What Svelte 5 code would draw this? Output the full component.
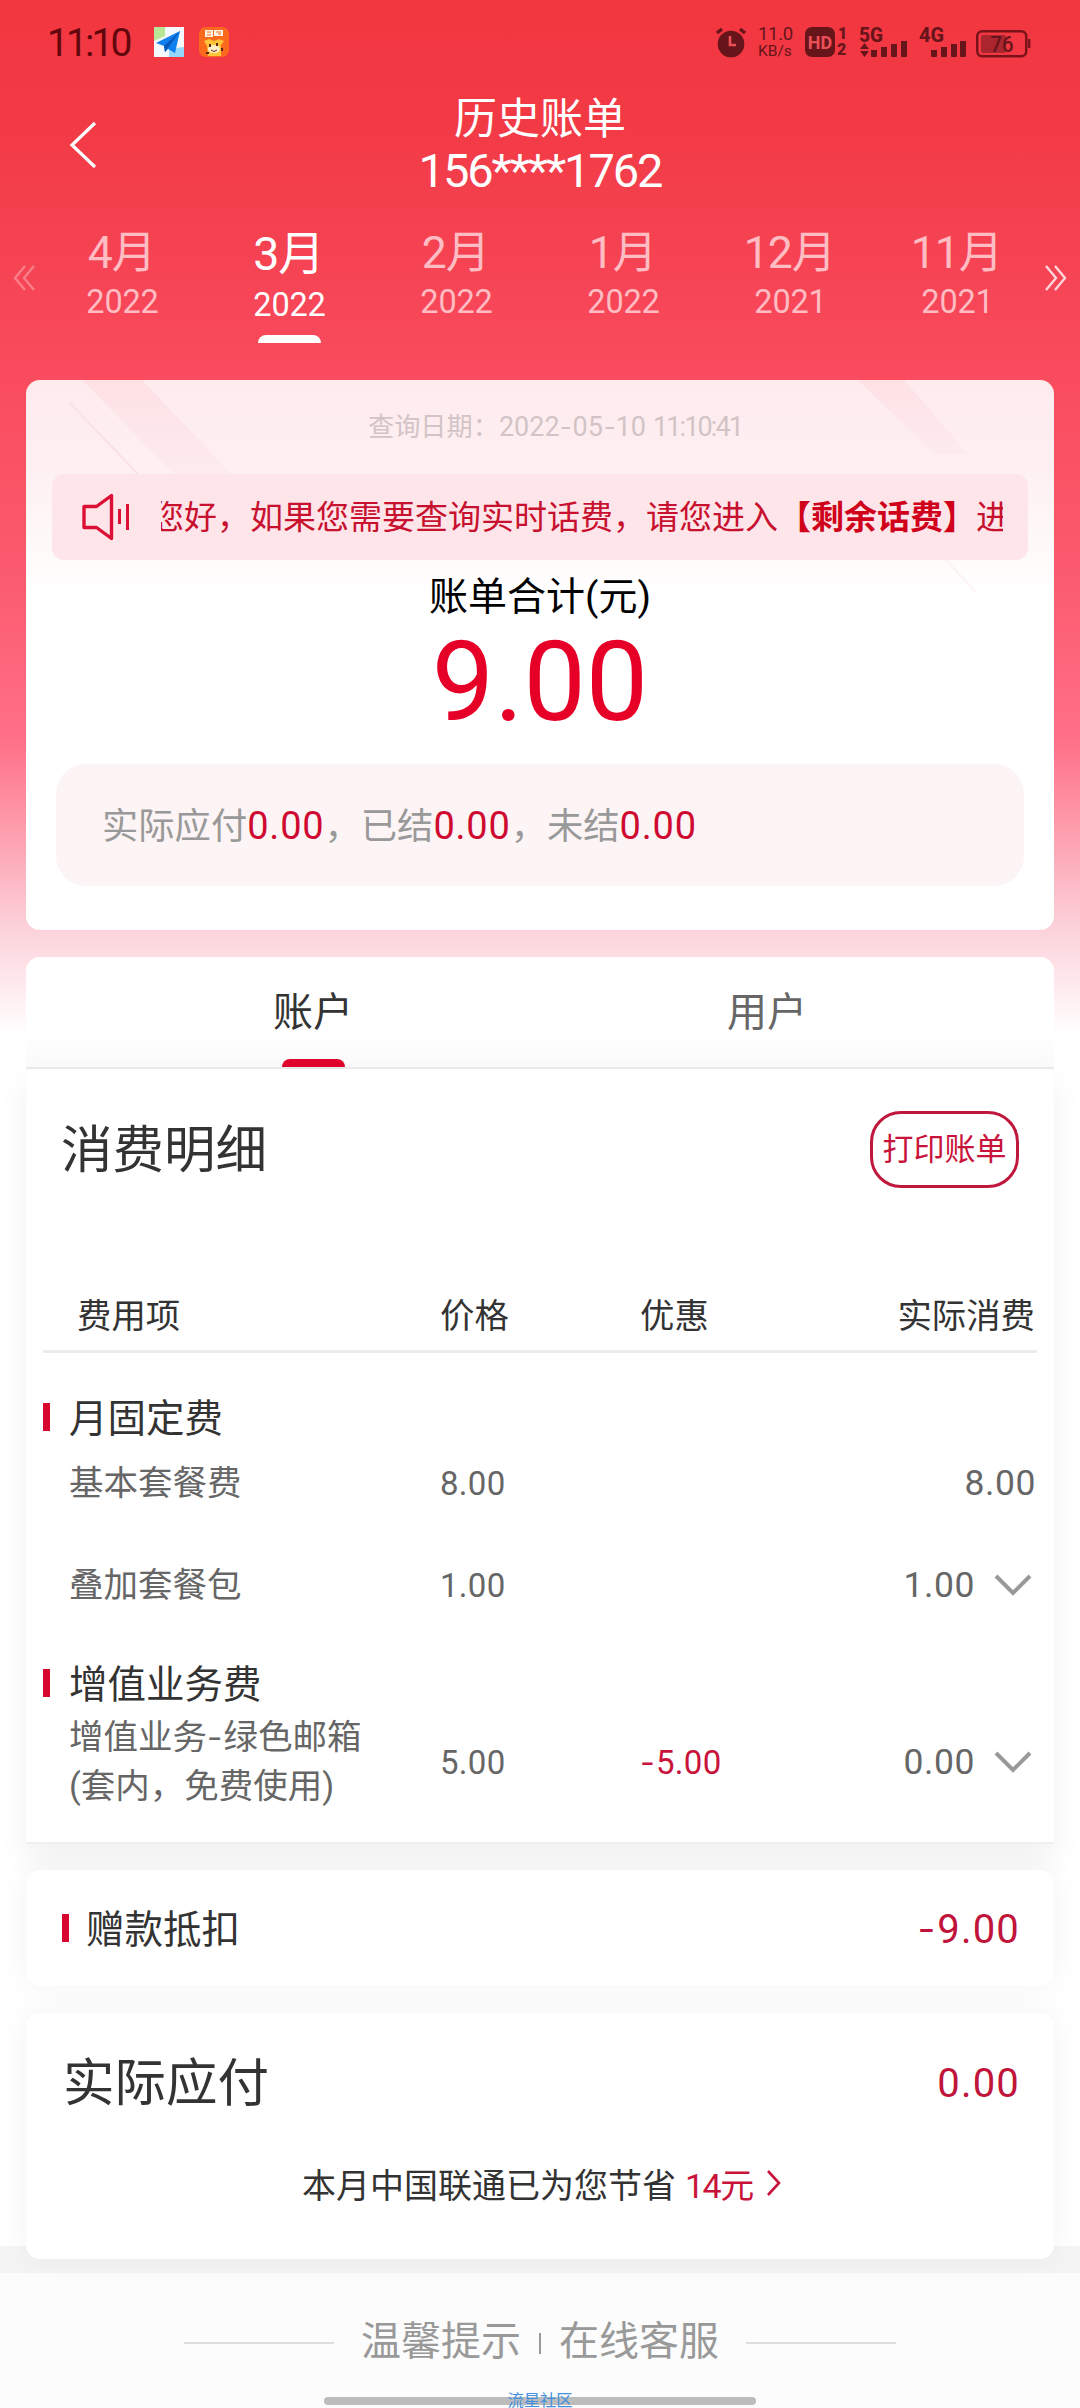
<!--
  App.svelte - History bill page (monthly bill, account tab)
-->
<script lang="ts">
  const months = [
    { month: '4月', year: '2022' },
    { month: '3月', year: '2022' },
    { month: '2月', year: '2022' },
    { month: '1月', year: '2022' },
    { month: '12月', year: '2021' },
    { month: '11月', year: '2021' }
  ];
  let activeMonth = $state(1);

  const tabs = ['账户', '用户'];
  let activeTab = $state(0);

  const sections = [
    {
      title: '月固定费',
      rows: [
        { name: ['基本套餐费'], price: '8.00', discount: '', actual: '8.00', more: false },
        { name: ['叠加套餐包'], price: '1.00', discount: '', actual: '1.00', more: true }
      ]
    },
    {
      title: '增值业务费',
      rows: [
        { name: ['增值业务-绿色邮箱', '(套内，免费使用)'], price: '5.00', discount: '-5.00', actual: '0.00', more: true }
      ]
    }
  ];
</script>

<!-- Text with its hyphens drawn a little wider -->
{#snippet dashed(text: string)}{#each text.split('-') as part, i}{#if i > 0}<i class="dash">-</i>{/if}{part}{/each}{/snippet}

<div class="page">
  <!-- Status bar -->
  <div class="status-bar">
    <span class="clock">11:10</span>
    <svg class="app-icon map" width="30" height="30" viewBox="0 0 30 30">
      <rect width="30" height="30" fill="#f4f7fb" />
      <path d="M0 0H11V9L0 14Z" fill="#b9e596" />
      <path d="M15 30V22L30 20V30Z" fill="#93d8fb" />
      <path d="M26 4L2 16L10 19L11 25L14 22L21 26Z" fill="#0f7ff0" />
      <path d="M26 4L10 19L11 25L14 21Z" fill="#0757b8" />
    </svg>
    <svg class="app-icon" width="30" height="30" viewBox="0 0 30 30">
      <rect width="30" height="30" rx="7" fill="#fb6a1c" />
      <path d="M6 3H14V10H6ZM15 3H24V9H15Z" fill="#fff3e4" />
      <path d="M8 5H12M8 8H12M17 5H22M19 7H22" stroke="#fb6a1c" stroke-width="1" />
      <path d="M5 14L10 12L15 14L20 12L25 14L22 18L22 29H9L8 19Z" fill="#ffc53a" />
      <ellipse cx="15" cy="22" rx="6" ry="4" fill="#fff0c8" />
      <path d="M10 17h2v3h-2zM17 16h2v3h-2zM7 25h3v2h-3zM22 21h2v3h-2z" fill="#5a2410" />
      <path d="M12 23Q15 26 18 23" stroke="#5a2410" stroke-width="1" fill="none" />
    </svg>

    <div class="status-right">
      <svg class="alarm" width="32" height="32" viewBox="0 0 32 32">
        <circle cx="16" cy="18" r="13.3" fill="#67141a" />
        <path d="M2 7L7 3M30 7L25 3" stroke="#67141a" stroke-width="3.5" />
        <path d="M15 10V19H21" stroke="#ec5058" stroke-width="2.6" fill="none" />
      </svg>
      <div class="speed">
        <span class="speed-value">11.0</span>
        <span class="speed-unit">KB/s</span>
      </div>
      <div class="hd">HD</div>
      <div class="sim-index"><span>1</span><span>2</span></div>
      <svg class="signal" width="50" height="32" viewBox="0 0 50 32">
        <text x="0" y="16" textLength="24" lengthAdjust="spacingAndGlyphs">5G</text>
        <path d="M1 23L5.5 17L10 23ZM1 25L5.5 31L10 25Z" />
        <path d="M12 24h6v6q0 1-1 1h-4q-1 0-1-1zM22 21h6v9q0 1-1 1h-4q-1 0-1-1zM32 18h6v12q0 1-1 1h-4q-1 0-1-1zM42 15h6v15q0 1-1 1h-4q-1 0-1-1z" />
      </svg>
      <svg class="signal second" width="50" height="32" viewBox="0 0 50 32">
        <text x="0" y="16" textLength="25" lengthAdjust="spacingAndGlyphs">4G</text>
        <path d="M12 24h6v6q0 1-1 1h-4q-1 0-1-1zM22 21h6v9q0 1-1 1h-4q-1 0-1-1zM32 18h6v12q0 1-1 1h-4q-1 0-1-1zM41 15h6v15q0 1-1 1h-4q-1 0-1-1z" />
      </svg>
      <svg class="battery" width="56" height="28" viewBox="0 0 56 28">
        <rect x="1.25" y="1.25" width="49" height="25" rx="5" fill="none" stroke="#7c1219" stroke-width="2.5" />
        <rect x="5" y="5" width="25" height="18" rx="2" fill="#ab252e" />
        <rect x="52" y="9" width="2.4" height="9" fill="#7c1219" />
        <text x="14.5" y="22" textLength="23" lengthAdjust="spacingAndGlyphs">76</text>
      </svg>
    </div>
  </div>

  <!-- Title -->
  <header class="header">
    <svg class="back" width="30" height="50" viewBox="0 0 30 50">
      <path d="M27 3L4 25L27 47" fill="none" stroke="#fff" stroke-width="3.2" />
    </svg>
    <div class="heading">
      <h1>历史账单</h1>
      <p>156****1762</p>
    </div>
  </header>

  <!-- Month picker -->
  <nav class="months">
    <svg class="page-arrow dim" width="23" height="26" viewBox="0 0 23 26">
      <path d="M12 1L2 13L12 25M21 1L11 13L21 25" />
    </svg>
    <div class="month-list">
      {#each months as item, i}
        <button class="month" class:active={i === activeMonth} onclick={() => (activeMonth = i)}>
          <span class="month-name">{item.month}</span>
          <span class="month-year">{item.year}</span>
        </button>
      {/each}
    </div>
    <svg class="page-arrow" width="23" height="26" viewBox="0 0 23 26">
      <path d="M2 1L12 13L2 25M11 1L21 13L11 25" />
    </svg>
  </nav>

  <!-- Total -->
  <section class="card total-card">
    <svg class="stripes" width="1028" height="220" viewBox="0 0 1028 220">
      <defs>
        <linearGradient id="fade" x1="0" y1="0" x2="0" y2="1">
          <stop offset="0" stop-color="#fde1e5" />
          <stop offset="1" stop-color="#fdebee" />
        </linearGradient>
      </defs>
      <path d="M56 0H116L206 94H148Z" fill="url(#fade)" />
      <path d="M43 22L112 94" stroke="#fbe0e5" stroke-width="2" />
      <path d="M832 0H878L942 74L908 74Z" fill="url(#fade)" />
      <path d="M918 178L950 212" stroke="#fdf3f5" stroke-width="2" />
    </svg>
    <p class="query-date">查询日期：<span>{@render dashed('2022-05-10')}</span><span class="time">11:10:41</span></p>
    <div class="notice">
      <svg class="speaker" width="48" height="48" viewBox="0 0 48 48">
        <path d="M2 13.5H14.5L29.5 2.5V45.5L14.5 34.5H2Z" fill="none" stroke="#dc1034" stroke-width="3.4" stroke-linejoin="round" />
        <path d="M37.5 16V31M45.5 11V37" stroke="#dc1034" stroke-width="3" />
      </svg>
      <div class="notice-view">
        <div class="notice-text">您好，如果您需要查询实时话费，请您进入<strong>【剩余话费】</strong>进</div>
      </div>
    </div>
    <p class="total-label">账单合计(元)</p>
    <p class="total-value">9.00</p>
    <div class="settled">
      实际应付<b>0.00</b>，已结<b>0.00</b>，未结<b>0.00</b>
    </div>
  </section>

  <!-- Account / user tabs -->
  <div class="tabs">
    {#each tabs as tab, i}
      <button class="tab" class:active={i === activeTab} onclick={() => (activeTab = i)}>{tab}</button>
    {/each}
  </div>

  <!-- Charge details -->
  <section class="card detail-card">
    <div class="detail-header">
      <h2>消费明细</h2>
      <button class="print">打印账单</button>
    </div>

    <div class="grid table-head">
      <span class="first">费用项</span>
      <span>价格</span>
      <span>优惠</span>
      <span class="last">实际消费</span>
    </div>

    {#each sections as section}
      <div class="section">
        <h3>{section.title}</h3>
        {#each section.rows as row}
          <div class="grid row" class:tall={row.name.length > 1}>
            <span class="name">
              {#each row.name as line}<span>{@render dashed(line)}</span>{/each}
            </span>
            <span class="price">{row.price}</span>
            <span class="discount">{@render dashed(row.discount)}</span>
            <span class="actual">
              {row.actual}
              {#if row.more}
                <svg width="40" height="24" viewBox="0 0 40 24">
                  <path d="M3 3L20 20L37 3" fill="none" stroke="#999" stroke-width="4" />
                </svg>
              {/if}
            </span>
          </div>
        {/each}
      </div>
    {/each}
  </section>

  <section class="card gift-card">
    <h3>赠款抵扣</h3>
    <span class="amount">{@render dashed('-9.00')}</span>
  </section>

  <section class="card pay-card">
    <div class="pay-row">
      <h2>实际应付</h2>
      <span class="amount">0.00</span>
    </div>
    <p class="saved">
      本月中国联通已为您节省<em>14元</em>
      <svg width="16" height="28" viewBox="0 0 16 28">
        <path d="M2 2L13 14L2 26" fill="none" stroke="#c8133a" stroke-width="2.6" />
      </svg>
    </p>
  </section>

  <footer class="footer">
    <span class="rule"></span>
    <span class="link">温馨提示</span>
    <span class="divider"></span>
    <span class="link">在线客服</span>
    <span class="rule"></span>
  </footer>

  <div class="home-bar"><span>流星社区</span></div>
</div>

<style>
  :global(body) {
    margin: 0;
    background: #fff;
  }

  .page {
    position: relative;
    display: flex;
    flex-direction: column;
    width: 1080px;
    height: 2408px;
    overflow: hidden;
    box-sizing: border-box;
    font-family: Roboto, 'Noto Sans CJK SC', sans-serif;
    color: #333;
    background:
      linear-gradient(#f4f4f4, #f4f4f4) 0 2246px / 100% 27px no-repeat,
      linear-gradient(#fcfcfc, #fcfcfc) 0 2273px / 100% 135px no-repeat,
      linear-gradient(
        #f23640 0,
        #f23a45 120px,
        #f64556 290px,
        #f94c5e 380px,
        #fb5a6e 570px,
        #ff7088 740px,
        #fd9dad 830px,
        #fcd0d9 925px,
        #fddfe5 960px,
        #fff 1035px
      );
  }

  h1,
  h2,
  h3,
  p {
    margin: 0;
    font-weight: 400;
  }

  button {
    padding: 0;
    border: none;
    background: none;
    font-family: inherit;
    color: inherit;
  }

  svg {
    flex: none;
    display: block;
    overflow: visible;
  }

  .dash {
    display: inline-block;
    margin: 0 0.1em;
    font-style: normal;
    transform: scaleX(1.3);
  }

  /* Status bar */
  .status-bar {
    display: flex;
    align-items: flex-start;
    height: 90px;
    padding: 27px 52px 0 47px;
    box-sizing: border-box;
    color: #67141a;
  }

  .clock {
    width: 107px;
    font-size: 39px;
    line-height: 33px;
    letter-spacing: -2.9px;
    color: #64070d;
    white-space: nowrap;
  }

  .app-icon.map {
    margin-right: 15px;
  }

  .status-right {
    display: flex;
    margin-left: auto;
  }

  .alarm {
    margin: -1px 11px 0 0;
  }

  .speed {
    display: flex;
    flex-direction: column;
    width: 47px;
    white-space: nowrap;
  }

  .speed-value {
    font-size: 18.5px;
    line-height: 15px;
    letter-spacing: -0.3px;
  }

  .speed-unit {
    margin-top: 1px;
    font-size: 15.5px;
    line-height: 16px;
  }

  .hd {
    width: 30px;
    height: 30px;
    border-radius: 7px;
    background: #67141a;
    color: #ec5058;
    font-size: 18px;
    font-weight: 700;
    line-height: 31px;
    text-align: center;
  }

  .sim-index {
    display: flex;
    flex-direction: column;
    width: 24px;
    padding-left: 2px;
    box-sizing: border-box;
    font-size: 16px;
    font-weight: 900;
    line-height: 15px;
  }

  .sim-index span:first-child {
    padding-left: 1px;
    margin-bottom: 2px;
    line-height: 13px;
  }

  .signal {
    margin-top: -1px;
    fill: #67141a;
  }

  .signal.second {
    margin: -1px 7px 0 10px;
  }

  .signal text {
    font-size: 20px;
    font-weight: 800;
  }

  .battery {
    margin: 3px -4px 0 0;
  }

  .battery text {
    font-size: 22px;
    font-weight: 500;
    fill: #67141a;
  }

  /* Title */
  .header {
    display: flex;
    height: 130px;
    padding-left: 68px;
    box-sizing: border-box;
  }

  .back {
    margin-top: 30px;
  }

  .heading {
    width: 884px;
    color: #fff;
    text-align: center;
  }

  .heading h1 {
    font-size: 43px;
    line-height: 58px;
  }

  .heading p {
    font-size: 47px;
    line-height: 46px;
    letter-spacing: -2.1px;
  }

  /* Months */
  .months {
    display: flex;
    align-items: flex-start;
    height: 160px;
  }

  .page-arrow {
    margin: 45px 3px 0 13px;
    fill: none;
    stroke: #ffd5da;
    stroke-width: 2.4;
  }

  .months > .page-arrow:last-child {
    margin-left: 3px;
  }

  .page-arrow.dim {
    opacity: 0.4;
  }

  .month-list {
    display: grid;
    grid-template-columns: repeat(6, 167px);
    width: 1002px;
  }

  .month {
    display: flex;
    flex-direction: column;
    align-items: center;
    color: #ffbcc3;
  }

  .month-name {
    margin-top: 7px;
    padding-right: 2px;
    font-size: 44.5px;
    line-height: 52px;
    letter-spacing: -1px;
  }

  .month-year {
    margin-top: 7px;
    font-size: 32.5px;
    line-height: 32px;
    letter-spacing: -0.2px;
  }

  .month.active {
    color: #fff;
  }

  .month.active .month-name {
    font-size: 46.5px;
    line-height: 55px;
  }

  .month.active .month-year::after {
    content: '';
    display: block;
    width: 63px;
    height: 8px;
    margin: 14px auto 0;
    border-radius: 8px 8px 0 0;
    background: #fff;
  }

  /* Cards */
  .card {
    flex: none;
    margin: 0 26px;
    border-radius: 14px;
    background: #fff;
    box-sizing: border-box;
  }

  .total-card {
    position: relative;
    height: 550px;
    overflow: hidden;
    background: linear-gradient(#feebee 0, #feeff1 80px, #fffcfc 190px, #fff 220px);
  }

  .stripes {
    position: absolute;
    top: 0;
    left: 0;
  }

  .query-date {
    position: relative;
    height: 94px;
    padding-left: 342px;
    font-size: 26.2px;
    line-height: 94px;
    color: #d2c4c6;
    white-space: nowrap;
  }

  .query-date span {
    font-size: 27px;
  }

  .query-date .time {
    margin-left: 7px;
    letter-spacing: -1.9px;
  }

  .notice {
    position: relative;
    display: flex;
    align-items: center;
    height: 86px;
    margin: 0 26px;
    padding-left: 30px;
    border-radius: 12px;
    background: #fee5e9;
  }

  .notice-view {
    width: 842px;
    margin: 0 0 5px 31px;
    overflow: hidden;
  }

  .notice-text {
    margin-left: -10px;
    font-family: 'Noto Sans CJK SC', sans-serif;
    font-size: 33px;
    line-height: 50px;
    color: #c8102f;
    white-space: nowrap;
  }

  .notice-text strong {
    color: #d0021b;
  }

  .total-label {
    height: 72px;
    font-size: 39px;
    line-height: 74px;
    color: #000;
    text-align: center;
  }

  .total-value {
    height: 132px;
    font-size: 111px;
    line-height: 100px;
    color: #e60027;
    text-align: center;
  }

  .settled {
    height: 122px;
    margin: 0 30px;
    padding-left: 46px;
    border-radius: 30px;
    background: #fcf4f5;
    font-size: 36.3px;
    line-height: 124px;
    color: #999;
    white-space: nowrap;
  }

  .settled b {
    font-size: 38px;
    font-weight: 400;
    letter-spacing: 0.8px;
    color: #cf0a31;
  }

  /* Tabs */
  .tabs {
    flex: none;
    display: flex;
    height: 112px;
    margin: 27px 26px 0;
    padding: 0 60px;
    border-bottom: 2px solid #ebebeb;
    border-radius: 14px 14px 0 0;
    background: linear-gradient(#fff 70%, #fafafa);
    box-sizing: border-box;
  }

  .tab {
    flex: 1;
    display: flex;
    flex-direction: column;
    align-items: center;
    justify-content: flex-start;
    padding-top: 9px;
    font-size: 40px;
    line-height: 93px;
    color: #666;
  }

  .tab.active {
    color: #333;
  }

  .tab.active::after {
    content: '';
    width: 63px;
    height: 8px;
    border-radius: 8px 8px 0 0;
    background: #e0052d;
  }

  /* Details */
  .detail-card {
    height: 775px;
    padding: 0 17px;
    border-bottom: 2px solid #efefef;
    border-radius: 0;
    box-shadow: 0 16px 30px rgba(0, 0, 0, 0.06);
  }

  .detail-header {
    display: flex;
    justify-content: space-between;
    align-items: center;
    height: 161px;
    padding: 0 18px;
  }

  h2 {
    padding-top: 3px;
    font-size: 51.5px;
    line-height: 60px;
  }

  .print {
    width: 149px;
    height: 77px;
    border: 3px solid #c0183c;
    border-radius: 31px;
    font-size: 31px;
    line-height: 70px;
    color: #c8133a;
    white-space: nowrap;
  }

  .grid {
    display: grid;
    grid-template-columns: 397px 200px 1fr auto;
    align-items: center;
  }

  .table-head {
    height: 123px;
    padding-top: 46px;
    border-bottom: 3px solid #ebebeb;
    box-sizing: border-box;
    font-size: 34.4px;
  }

  .table-head .first {
    padding-left: 34px;
  }

  .table-head .last {
    padding-right: 2px;
  }

  .section {
    padding-top: 38px;
  }

  .section + .section {
    padding-top: 21px;
  }

  h3 {
    display: flex;
    align-items: center;
    height: 52px;
    padding-bottom: 4px;
    box-sizing: border-box;
    font-size: 38.5px;
  }

  h3::before {
    content: '';
    width: 7px;
    height: 28px;
    margin: 4px 19px 0 0;
    background: #d8062f;
  }

  .row {
    height: 102px;
    padding-left: 26px;
    grid-template-columns: 371px 200px 1fr auto;
    color: #666;
  }

  .section h3 + .row:not(.tall) {
    margin-top: -11px;
  }

  .row.tall {
    height: 106px;
  }

  .name {
    display: flex;
    flex-direction: column;
    font-size: 34.5px;
    line-height: 49px;
    white-space: nowrap;
  }

  .price,
  .discount {
    font-size: 33px;
    letter-spacing: 0.3px;
  }

  .discount {
    color: #c8133a;
  }

  .actual {
    display: flex;
    align-items: center;
    gap: 18px;
    padding-right: 1px;
    font-size: 35.5px;
    letter-spacing: 0.6px;
  }

  .actual svg {
    margin-right: 3px;
  }

  /* Summary cards */
  .gift-card {
    display: flex;
    justify-content: space-between;
    align-items: center;
    height: 116px;
    margin-top: 26px;
    padding: 0 35px 0 36px;
    box-shadow: 0 0 30px rgba(0, 0, 0, 0.05);
  }

  .gift-card h3::before {
    margin-right: 17px;
  }

  .amount {
    padding-top: 2px;
    margin-right: -1px;
    font-size: 40px;
    letter-spacing: 1.2px;
    color: #c0143a;
  }

  .pay-card {
    height: 246px;
    margin-top: 27px;
    padding: 36px 35px 0 37px;
    box-shadow: 0 0 30px rgba(0, 0, 0, 0.05);
  }

  .pay-row {
    display: flex;
    justify-content: space-between;
    align-items: center;
    height: 66px;
  }

  .saved {
    display: flex;
    align-items: center;
    height: 66px;
    margin-top: 35px;
    padding-left: 239px;
    font-size: 34px;
    white-space: nowrap;
  }

  .saved em {
    margin: 0 13px 0 9px;
    font-style: normal;
    letter-spacing: -1.5px;
    color: #c8133a;
  }

  /* Footer */
  .footer {
    display: flex;
    justify-content: center;
    align-items: center;
    height: 80px;
    margin-top: 44px;
    font-size: 40px;
    line-height: 56px;
    color: #999;
  }

  .link {
    margin-top: -3px;
  }

  .rule {
    width: 150px;
    height: 2px;
    margin: 0 27px;
    background: #dedede;
  }

  .divider {
    width: 2px;
    height: 21px;
    margin: 0 18px;
    background: #999;
  }

  .home-bar {
    width: 432px;
    height: 8px;
    margin: 14px auto 0;
    border-radius: 4px;
    background: #bcbcbc;
    text-align: center;
  }

  .home-bar span {
    display: block;
    margin-top: -5px;
    font-size: 16.3px;
    line-height: 18px;
    color: #4390dc;
  }
</style>
